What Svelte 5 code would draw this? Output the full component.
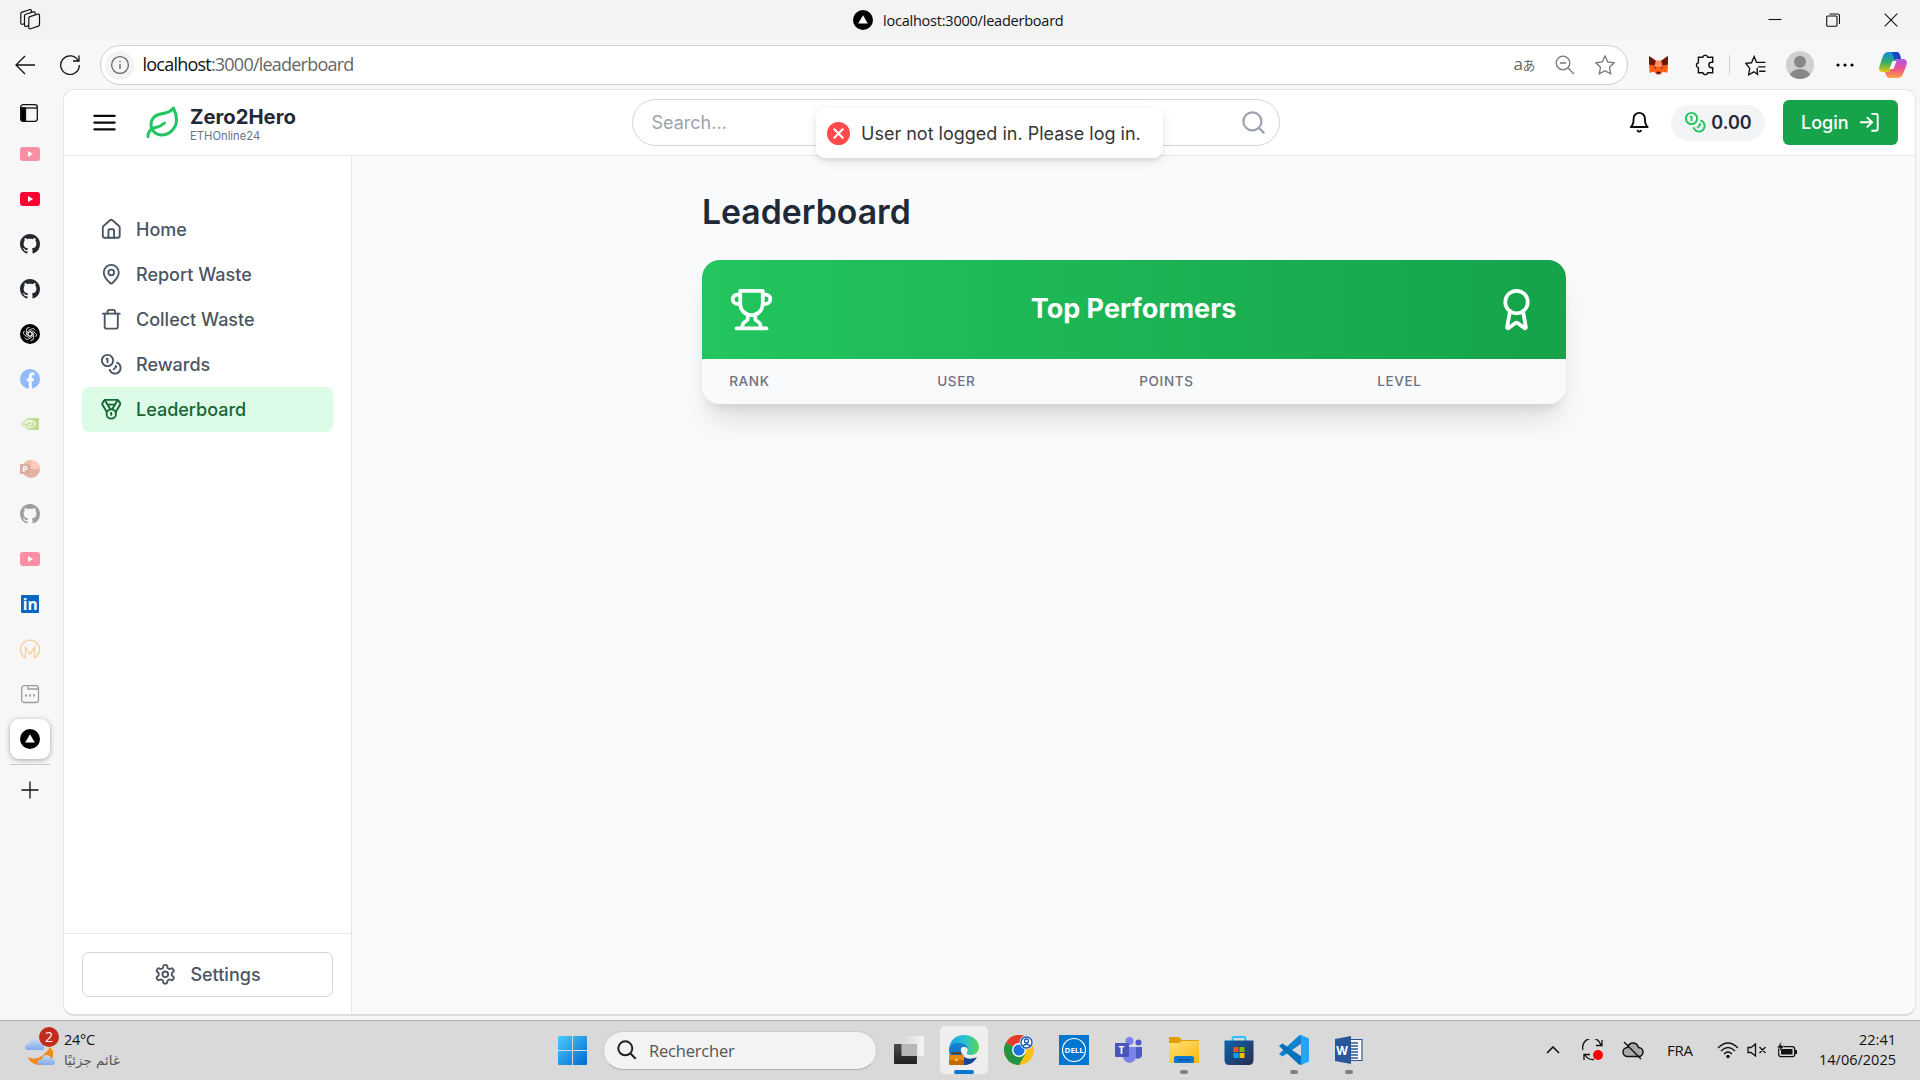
<script>
  const ring = (x, y, r) => `M${x - r} ${y}a${r} ${r} 0 1 0 ${2 * r} 0a${r} ${r} 0 1 0 ${-2 * r} 0`;

  const icons = {
    menu: ['M3 12h18', 'M3 6h18', 'M3 18h18'],
    leaf: ['M11 20A7 7 0 0 1 9.8 6.1C15.5 5 17 4.48 19 2c1 2 2 4.18 2 8 0 5.5-4.78 10-10 10Z', 'M2 21c0-3 1.85-5.36 5.08-6C9.5 14.52 12 13 13 12'],
    search: [ring(11, 11, 8), 'm21 21-4.3-4.3'],
    bell: ['M6 8a6 6 0 0 1 12 0c0 7 3 9 3 9H3s3-2 3-9', 'M10.3 21a1.94 1.94 0 0 0 3.4 0'],
    coins: [ring(8, 8, 6), 'M18.09 10.37A6 6 0 1 1 10.34 18', 'M7 6h1v4', 'm16.71 13.88.7.71-2.82 2.82'],
    login: ['M15 3h4a2 2 0 0 1 2 2v14a2 2 0 0 1-2 2h-4', 'm10 17 5-5-5-5', 'M15 12H3'],
    home: ['M15 21v-8a1 1 0 0 0-1-1h-4a1 1 0 0 0-1 1v8', 'M3 10a2 2 0 0 1 .709-1.528l7-5.999a2 2 0 0 1 2.582 0l7 5.999A2 2 0 0 1 21 10v9a2 2 0 0 1-2 2H5a2 2 0 0 1-2-2z'],
    pin: ['M20 10c0 4.993-5.539 10.193-7.399 11.799a1 1 0 0 1-1.202 0C9.539 20.193 4 14.993 4 10a8 8 0 0 1 16 0', ring(12, 10, 3)],
    trash: ['M3 6h18', 'M19 6v14c0 1-1 2-2 2H7c-1 0-2-1-2-2V6', 'M8 6V4c0-1 1-2 2-2h4c1 0 2 1 2 2v2'],
    medal: ['M7.21 15 2.66 7.14a2 2 0 0 1 .13-2.2L4.4 2.8A2 2 0 0 1 6 2h12a2 2 0 0 1 1.6.8l1.6 2.14a2 2 0 0 1 .14 2.2L16.79 15', 'M11 12 5.12 2.2', 'm13 12 5.88-9.8', 'M8 7h8', ring(12, 17, 5), 'M12 18v-2h-.5'],
    settings: ['M12.22 2h-.44a2 2 0 0 0-2 2v.18a2 2 0 0 1-1 1.73l-.43.25a2 2 0 0 1-2 0l-.15-.08a2 2 0 0 0-2.73.73l-.22.38a2 2 0 0 0 .73 2.73l.15.1a2 2 0 0 1 1 1.72v.51a2 2 0 0 1-1 1.74l-.15.09a2 2 0 0 0-.73 2.73l.22.38a2 2 0 0 0 2.73.73l.15-.08a2 2 0 0 1 2 0l.43.25a2 2 0 0 1 1 1.73V20a2 2 0 0 0 2 2h.44a2 2 0 0 0 2-2v-.18a2 2 0 0 1 1-1.73l.43-.25a2 2 0 0 1 2 0l.15.08a2 2 0 0 0 2.73-.73l.22-.39a2 2 0 0 0-.73-2.73l-.15-.08a2 2 0 0 1-1-1.74v-.5a2 2 0 0 1 1-1.74l.15-.09a2 2 0 0 0 .73-2.73l-.22-.38a2 2 0 0 0-2.73-.73l-.15.08a2 2 0 0 1-2 0l-.43-.25a2 2 0 0 1-1-1.73V4a2 2 0 0 0-2-2z', ring(12, 12, 3)],
    trophy: ['M6 9H4.5a2.5 2.5 0 0 1 0-5H6', 'M18 9h1.5a2.5 2.5 0 0 0 0-5H18', 'M4 22h16', 'M10 14.66V17c0 .55-.47.98-.97 1.21C7.85 18.75 7 20.24 7 22', 'M14 14.66V17c0 .55.47.98.97 1.21C16.15 18.75 17 20.24 17 22', 'M18 2H6v7a6 6 0 0 0 12 0V2Z'],
    award: ['m15.477 12.89 1.515 8.526a.5.5 0 0 1-.81.47l-3.58-2.687a1 1 0 0 0-1.197 0l-3.586 2.686a.5.5 0 0 1-.81-.469l1.514-8.526', ring(12, 8, 6)]
  };

  const nav = [
    { icon: 'home', label: 'Home' },
    { icon: 'pin', label: 'Report Waste' },
    { icon: 'trash', label: 'Collect Waste' },
    { icon: 'coins', label: 'Rewards' },
    { icon: 'medal', label: 'Leaderboard', active: true }
  ];

  const tabs = [
    { kind: 'youtube', faded: true }, { kind: 'youtube' }, { kind: 'github' }, { kind: 'github' },
    { kind: 'openai' }, { kind: 'facebook', faded: true }, { kind: 'nvidia', faded: true },
    { kind: 'ppt', faded: true }, { kind: 'github', faded: true }, { kind: 'youtube', faded: true },
    { kind: 'linkedin' }, { kind: 'moodle', faded: true }, { kind: 'page', faded: true },
    { kind: 'next', current: true }
  ];

  const apps = [
    { kind: 'taskview' }, { kind: 'edge', active: true }, { kind: 'chrome' }, { kind: 'dell' }, { kind: 'teams' },
    { kind: 'files', open: true }, { kind: 'store' }, { kind: 'code', open: true }, { kind: 'word', open: true }
  ];

  const columns = ['Rank', 'User', 'Points', 'Level'];
</script>

{#snippet icon(name, size)}
  <svg class="icon {size}" viewBox="0 0 24 24">
    {#each icons[name] as d}<path {d} />{/each}
  </svg>
{/snippet}

{#snippet nextLogo()}
  <svg class="fav" viewBox="0 0 20 20"><circle cx="10" cy="10" r="10" /><path d="M10 5.2 14.8 13.4H5.2z" fill="#fff" /></svg>
{/snippet}

{#snippet favicon(kind)}
  {#if kind === 'youtube'}
    <svg class="fav" viewBox="0 0 20 20"><rect y="3" width="20" height="14" rx="3" fill="#ff0033" /><path d="M8 7v6l5-3z" fill="#fff" /></svg>
  {:else if kind === 'github'}
    <svg class="fav" viewBox="0 0 16 16"><path fill="#24292f" d="M8 0C3.58 0 0 3.58 0 8c0 3.54 2.29 6.53 5.47 7.59.4.07.55-.17.55-.38 0-.19-.01-.82-.01-1.49-2.01.37-2.53-.49-2.69-.94-.09-.23-.48-.94-.82-1.13-.28-.15-.68-.52-.01-.53.63-.01 1.08.58 1.23.82.72 1.21 1.87.87 2.33.66.07-.52.28-.87.51-1.07-1.78-.2-3.64-.89-3.64-3.95 0-.87.31-1.59.82-2.15-.08-.2-.36-1.02.08-2.12 0 0 .67-.21 2.2.82.64-.18 1.32-.27 2-.27s1.36.09 2 .27c1.53-1.04 2.2-.82 2.2-.82.44 1.1.16 1.92.08 2.12.51.56.82 1.27.82 2.15 0 3.07-1.87 3.75-3.65 3.95.29.25.54.73.54 1.48 0 1.07-.01 1.93-.01 2.2 0 .21.15.46.55.38A8.01 8.01 0 0 0 16 8c0-4.42-3.58-8-8-8z" /></svg>
  {:else if kind === 'openai'}
    <svg class="fav" viewBox="0 0 20 20"><circle cx="10" cy="10" r="10" />
      <g fill="none" stroke="#fff" stroke-width=".8">
        {#each [0, 60, 120, 180, 240, 300] as a}
          <path d="M10 7.7 12.1 8.9V13l-3.4 2A2.9 2.9 0 0 1 4.6 13.6" transform="rotate({a} 10 10)" />
        {/each}
      </g>
    </svg>
  {:else if kind === 'facebook'}
    <svg class="fav" viewBox="0 0 20 20"><circle cx="10" cy="10" r="10" fill="#0866ff" /><path d="M14.4 4.7h-1.6q-2.500 0-2.500 2.900V20M6.700 10.700h7.100" fill="none" stroke="#fff" stroke-width="3" /></svg>
  {:else if kind === 'nvidia'}
    <svg class="fav" viewBox="0 0 20 20"><path d="M8 4h11v12H8z" fill="#76b900" /><path d="M1 10q4-5.5 9-5.5T18 10q-3.500 5.200-8.200 5.200T1 10z" fill="#76b900" /><path d="M3 10q3-3.800 7-3.600 3.500.3 5.500 3.100-2.500 4.200-6 4.200T3 10zM5.600 9.900q2-2.500 4.600-2.100 2.200.5 1.600 2.200-1 2-3 1.200l-.7-1.500" fill="none" stroke="#fff" stroke-width="1.100" /></svg>
  {:else if kind === 'ppt'}
    <svg class="fav" viewBox="0 0 20 20"><circle cx="11" cy="10" r="9" fill="#d35230" /><path d="M11 1a9 9 0 0 1 9 9h-9z" fill="#ff8f6b" /><path d="M2 10a9 9 0 0 1 9-9v9z" fill="#ed6c47" /><rect y="5" width="10.500" height="10" rx="1" fill="#b7472a" /><text x="2.300" y="13.300" class="mark" font-size="9">P</text></svg>
  {:else if kind === 'linkedin'}
    <svg class="fav" viewBox="0 0 20 20"><rect x="1" y="1" width="18" height="18" rx="1" fill="#0a66c2" /><text x="2.700" y="16" class="mark" font-size="15.500">in</text></svg>
  {:else if kind === 'moodle'}
    <svg class="fav" viewBox="0 0 20 20"><path d="M5.500 19V8.500L10 15l4.500-6.500V19M5.500 19a9.500 9.500 0 1 1 9 0" fill="none" stroke="#f98f1d" stroke-width="1.300" /></svg>
  {:else if kind === 'page'}
    <svg class="fav" viewBox="0 0 20 20" fill="none" stroke="#222" stroke-width="1.300"><rect x="1.700" y="1.700" width="16.800" height="16.800" rx="2.500" /><path d="M8 2v3h10.500" /><path d="M5 11.500h2M9 11.500h2M13 11.500h2" stroke-width="2" /></svg>
  {:else}
    {@render nextLogo()}
  {/if}
{/snippet}

{#snippet appIcon(kind)}
  {#if kind === 'taskview'}
    <svg class="app-icon" viewBox="0 0 30 30"><defs><linearGradient id="tv" x2="0" y2="1"><stop stop-color="#4a4a4a" /><stop offset="1" stop-color="#1f1f1f" /></linearGradient><linearGradient id="tw"><stop stop-color="#d8d8d8" /><stop offset="1" stop-color="#f8f8f8" /></linearGradient></defs><rect y="9" width="23" height="20" rx="1" fill="url(#tv)" /><rect x="7.500" y="1" width="22.500" height="20" rx="1" fill="url(#tw)" fill-opacity=".9" /><rect x="8" y="9" width="15" height="12" fill="#b8b8b8" /></svg>
  {:else if kind === 'edge'}
    <svg class="app-icon" viewBox="0 0 30 30"><defs><linearGradient id="e1"><stop stop-color="#1a9ee0" /><stop offset=".5" stop-color="#2bbfd8" /><stop offset="1" stop-color="#57d84f" /></linearGradient><linearGradient id="e3" x2="0" y2="1"><stop stop-color="#1584d4" /><stop offset="1" stop-color="#0a5cb0" /></linearGradient></defs>
      <path d="M0 14C1 5 7 0 15 0c9 0 15 6 15 12 0 5-4 8-8 8-3 0-5-1-4-3 2-4 0-7-5-7C7 10 3 12 0 14z" fill="url(#e1)" /><path d="M0 14c2-4 6-7 11-6 4 0 8 3 8 6-3-3-7 0-6 5 1 4 6 7 14 4-3 5-8 7-13 7C6 30 0 24 0 14z" fill="url(#e3)" /><path d="M13 19c2 5 9 6 15 3-3 6-8 8-13 8-3-3-3-7-2-11z" fill="#124b91" /><circle cx="15" cy="15" r="3.200" fill="#eee" />
      <path d="M4 20v-2h7v2" fill="none" stroke="#6e3a00" stroke-width="1.300" /><rect y="20" width="15" height="10" rx="1" fill="#c66a00" /><path d="M0 20h15v5H0z" fill="#e58a13" /><circle cx="7.500" cy="25" r="1.300" fill="#ffd23e" /></svg>
  {:else if kind === 'chrome'}
    <svg class="app-icon" viewBox="0 0 30 30"><circle cx="15" cy="15" r="15" fill="#fbc116" /><path d="M15 15 2 7.500A15 15 0 0 1 28 7.500H15z" fill="#e33b2e" /><path d="M2 7.500A15 15 0 0 0 15 30l6.500-11.200L15 15z" fill="#229342" /><circle cx="15" cy="15" r="7" fill="#fff" /><circle cx="15" cy="15" r="5.600" fill="#1a73e8" /><circle cx="22.500" cy="7.500" r="7" fill="#dce8fc" /><circle cx="22.500" cy="7.500" r="5.500" fill="#fff" stroke="#1b56b4" stroke-width="1.400" /><circle cx="22.500" cy="6" r="2" fill="none" stroke="#1b56b4" stroke-width="1.300" /><path d="M18.700 11q3.800-3.500 7.600 0" fill="none" stroke="#1b56b4" stroke-width="1.400" /></svg>
  {:else if kind === 'dell'}
    <svg class="app-icon" viewBox="0 0 30 30"><path d="M0 0h30v30H0z" fill="#0076ce" /><circle cx="15" cy="15" r="11.500" fill="none" stroke="#fff" stroke-width="1.200" /><text x="5.600" y="17.800" class="mark" font-size="7.600" textLength="19" lengthAdjust="spacingAndGlyphs">DELL</text></svg>
  {:else if kind === 'teams'}
    <svg class="app-icon" viewBox="0 0 30 30"><circle cx="24.500" cy="7.500" r="3" fill="#5059c9" /><path d="M19 12h9v8c0 5-9 5-9 0z" fill="#5059c9" /><circle cx="15.500" cy="6" r="4" fill="#7b83eb" /><path d="M9 12h13v9c0 9-13 9-13 0z" fill="#7b83eb" /><rect x="1" y="8" width="14" height="14" rx="1" fill="#4b53bc" /><text x="4.500" y="18.700" class="mark" font-size="10">T</text></svg>
  {:else if kind === 'files'}
    <svg class="app-icon" viewBox="0 0 30 30"><defs><linearGradient id="fo" x2="1" y2="1"><stop stop-color="#ffe07a" /><stop offset="1" stop-color="#fbb80f" /></linearGradient></defs><path d="M0 3q0-1 1-1h9l3 3h16q1 0 1 1v10H0z" fill="#dfa007" /><path d="M0 8h10l3-2h17v22H0z" fill="url(#fo)" /><path d="M5 28v-5q0-2 2-2h16q2 0 2 2v5z" fill="#0d78ce" /><path d="M8.500 25h13" stroke="#064d93" stroke-width="1.200" /></svg>
  {:else if kind === 'store'}
    <svg class="app-icon" viewBox="0 0 30 30"><defs><linearGradient id="st" x2="1" y2="1"><stop stop-color="#0b64ad" /><stop offset="1" stop-color="#2b2c52" /></linearGradient></defs><path d="M8.500 6V3.500Q8.500 2 10 2h10q1.500 0 1.500 1.500V6" fill="none" stroke="#26c0f2" stroke-width="1.800" /><path d="M.5 5.500h29V25q0 5-5 5h-19q-5 0-5-5z" fill="url(#st)" /><path d="M9.500 12h5v5h-5z" fill="#f25022" /><path d="M15.500 12h5v5h-5z" fill="#7fba00" /><path d="M9.500 18h5v5h-5z" fill="#00a4ef" /><path d="M15.500 18h5v5h-5z" fill="#ffb900" /></svg>
  {:else if kind === 'code'}
    <svg class="app-icon" viewBox="0 0 30 30"><path d="M22.500 8.500 3.500 21.500 0 19 20 .6 22.500 0z" fill="#0a84d0" /><path d="M22.500 21.500 3.500 8.500 0 11l20 18.400 2.500.6z" fill="#0072bc" /><path d="M22 0 30 3.500v23L22 30z" fill="#28a5f0" /></svg>
  {:else}
    <svg class="app-icon" viewBox="0 0 30 30"><path d="M14 4.500h14v21H14z" fill="#fff" stroke="#2b579a" stroke-width="1.200" /><path d="M16 8h8M16 11h8M16 14h8M16 17h8M16 20h8M16 23h8" stroke="#2b579a" stroke-width="1.300" /><path d="M1 4 17 1v28L1 26z" fill="#2b579a" /><text x="2.300" y="19.500" class="mark" font-size="12">W</text></svg>
  {/if}
{/snippet}

<div class="screen">
  <div class="titlebar">
    <svg class="workspaces" viewBox="0 0 22 22" fill="#f3f3f3" stroke="#111" stroke-width="1.200" stroke-linejoin="round">
      {#each [[-8, -4.500], [-4.300, -2.300], [0, 0]] as [x, y]}
        <path transform="translate({x} {y})" d="m11 7.600 7.500-2.400q2-.5 2 1.500v8.700q0 1.300-1.200 1.700l-7.500 2.600q-2 .6-2-1.500V9.400q0-1.400 1.200-1.800z" />
      {/each}
    </svg>
    <div class="window-title">{@render nextLogo()}<span>localhost:3000/leaderboard</span></div>
    <div class="window-buttons">
      <svg viewBox="0 0 14 14"><path d="M.5 6.500h13" /></svg>
      <svg viewBox="0 0 14 14"><rect x=".7" y="3" width="10.300" height="10.300" rx="1" /><path d="M3.500 1h8q2 0 2 2v8" /></svg>
      <svg viewBox="0 0 14 14"><path d="m.7.7 12.600 12.600M13.300.7.7 13.300" /></svg>
    </div>
  </div>

  <div class="toolbar">
    <svg class="line back" viewBox="0 0 20 20"><path d="M20 10H1M10 1 1 10l9 9" /></svg>
    <svg class="line reload" viewBox="0 0 20 20"><path d="M18.300 6A9.300 9.300 0 1 0 19.300 10M19 .5V6h-6" /></svg>
    <div class="address">
      <span class="info"><svg class="line" viewBox="0 0 20 20"><circle cx="10" cy="10" r="8.400" /><path d="M10 9v5M10 5.800v1.500" /></svg></span>
      <span class="url"><b>localhost</b>:3000/leaderboard</span>
      <div class="address-tools">
        <span class="translate">a<small>あ</small></span>
        <svg class="line" viewBox="0 0 20 20"><circle cx="8" cy="8" r="6.800" /><path d="m13 13 6 6M5 8h6" /></svg>
        <svg class="line" viewBox="0 0 20 20"><path d="m10 1 2.800 6 6.400.8-4.700 4.500 1.200 6.500L10 15.700l-5.700 3.100 1.200-6.500L.8 7.800 7.200 7z" /></svg>
      </div>
    </div>
    <svg class="fox" viewBox="0 0 20 20"><path d="m1 1 6.500 4.500h5L19 1v8l-.5 8-4.500-1-2 2.500H8L6 16l-4.500 1L1 9z" fill="#ff5c16" /><path d="m1 1 6.500 4.500L6 10 1 9zM19 1l-6.500 4.500L14 10l5-1z" fill="#661800" /><path d="m7.500 5.500-1 6h7l-1-6z" fill="#ff8d5d" /><path d="m5.500 11 2.500.8-.5 1.300zM14.500 11l-2.500.8.5 1.300zM8 16h4l-.5 1.800h-3z" fill="#2a1d2f" /></svg>
    <svg class="line puzzle" viewBox="0 0 20 20"><path d="M4 3h4a2.300 2.300 0 0 1 4.500 0H17v4.500h-1a2.300 2.300 0 0 0 0 5h1V17h-4.500a2.300 2.300 0 0 1-4.500 0H4v-4.500a2.300 2.300 0 0 1 0-4.500z" /></svg>
    <i class="divider"></i>
    <svg class="line favorites" viewBox="0 0 20 20"><path d="M11.500 12.300 12 18.500 8.500 16l-5 2.800 1-6.100L.8 8l5.400-.6L8.700 1.500 11 7h8.500M12.500 11.300h7M13.500 15.500h6" /></svg>
    <svg class="avatar" viewBox="0 0 28 28"><clipPath id="av"><circle cx="14" cy="14" r="14" /></clipPath><g clip-path="url(#av)"><path d="M0 0h28v28H0z" fill="#d2d0ce" /><circle cx="14" cy="10.700" r="6" fill="#8a8886" /><ellipse cx="14" cy="26" rx="10.500" ry="8" fill="#8a8886" /></g></svg>
    <svg class="more" viewBox="0 0 18 4"><circle cx="2" cy="2" r="1.600" /><circle cx="9" cy="2" r="1.600" /><circle cx="16" cy="2" r="1.600" /></svg>
    <svg class="copilot" viewBox="0 0 28 28"><defs><linearGradient id="c1" x2="0" y2="1"><stop stop-color="#1588e0" /><stop offset=".5" stop-color="#2fae6c" /><stop offset="1" stop-color="#e8c20b" /></linearGradient><linearGradient id="c2" x2="0" y2="1"><stop stop-color="#a45bf0" /><stop offset=".5" stop-color="#ee5090" /><stop offset="1" stop-color="#ffa33e" /></linearGradient></defs><path d="M10 1h8q2 0 3 3l1 4h-4q-2 0-3 3l-3 7q-1 3-4 3H4q-5 0-3.500-6L4 5q1.500-4 6-4z" fill="url(#c1)" /><path d="M13 1h5q2 0 3 3l1 4h-4q-2 0-2.500 1z" fill="#1647c8" /><path d="M18 27h-8q-2 0-3-3l-1-3h3q2 0 3-3l3-7q1-3 4-3h5q5 0 3.500 6L24 23q-1.500 4-6 4z" fill="url(#c2)" /><path d="m13.500 10-3 8h4l3-8z" fill="#fff" /></svg>
  </div>

  <div class="middle">
    <div class="tabs">
      <svg class="line panel" viewBox="0 0 20 20"><rect x="1.700" y="1.700" width="16.600" height="16.600" rx="2.500" /><path d="M2 5h16" /><path d="M2 5h4.500v13H4q-2 0-2-2z" fill="#000" /></svg>
      {#each tabs as t}
        <div class="tab" class:current={t.current}><span class:faded={t.faded}>{@render favicon(t.kind)}</span></div>
      {/each}
      <i class="tab-rule"></i>
      <svg class="line plus" viewBox="0 0 20 20"><path d="M10 1.500v17M1.500 10h17" /></svg>
    </div>

    <div class="page">
      <header>
        <button class="burger">{@render icon('menu', 'lg')}</button>
        <span class="leaf">{@render icon('leaf', 'xl')}</span>
        <div class="brand"><strong>Zero2Hero</strong><small>ETHOnline24</small></div>
        <div class="search"><span>Search...</span>{@render icon('search', 's27')}</div>
        <span class="bell">{@render icon('bell', 'md')}</span>
        <div class="balance">{@render icon('coins', 'md')}<span>0.00</span></div>
        <button class="login">Login {@render icon('login', 'md')}</button>
      </header>
      <div class="body">
        <aside>
          <nav>
            {#each nav as n}
              <div class="nav-item" class:active={n.active}>{@render icon(n.icon, 'md')}<span>{n.label}</span></div>
            {/each}
          </nav>
          <div class="aside-foot"><button class="settings">{@render icon('settings', 'md')}<span>Settings</span></button></div>
        </aside>
        <main>
          <div class="content">
            <h1>Leaderboard</h1>
            <section class="card">
              <div class="card-head">{@render icon('trophy', 'xxl')}<h2>Top Performers</h2>{@render icon('award', 'xxl')}</div>
              <div class="thead">{#each columns as c}<span>{c}</span>{/each}</div>
            </section>
          </div>
        </main>
      </div>
      <div class="toast">
        <svg class="toast-icon" viewBox="0 0 22 22"><circle cx="11" cy="11" r="11" fill="#ff4b4b" /><path d="m7 7 8 8M15 7l-8 8" stroke="#fff" stroke-width="2" stroke-linecap="round" /></svg>
        <span>User not logged in. Please log in.</span>
      </div>
    </div>
  </div>

  <div class="taskbar">
    <div class="weather">
      <div class="weather-icon">
        <svg viewBox="0 0 32 34"><defs><linearGradient id="cl" x2="0" y2="1"><stop stop-color="#c9d9f8" /><stop offset="1" stop-color="#82a9ea" /></linearGradient></defs><path d="M3 24q6 4 14-1 6-5 8-9l3 4q1 8-5 12-6 4-13 1-6-2-7-7z" fill="#f0881c" /><path d="M3 17q-3 0-3-3t4-3q1-5 5-5t5 4q5 0 5 4t-3 3z" fill="url(#cl)" /><path d="M15 32q-3-1-2-4 1-2 4-2 1-4 5-4 4 1 4 4 4 0 4 3t-3 3z" fill="url(#cl)" /></svg>
        <span class="badge">2</span>
      </div>
      <div class="weather-text"><span>24°C</span><small dir="rtl">غائم جزئيًا</small></div>
    </div>
    <svg class="start" viewBox="0 0 29 29"><defs><linearGradient id="wn" gradientUnits="userSpaceOnUse" x1="0" y1="0" x2="29" y2="29"><stop stop-color="#4cc9fd" /><stop offset="1" stop-color="#0169cf" /></linearGradient></defs><path d="M0 1q0-1 1-1h13v14H0zM15 0h13q1 0 1 1v13H15zM0 15h14v14H1q-1 0-1-1zM15 15h14v13q0 1-1 1H15z" fill="url(#wn)" /></svg>
    <div class="task-search">
      <svg viewBox="0 0 20 20"><circle cx="8.300" cy="8.300" r="7" /><path d="m13.300 13.300 5.400 5.400" /></svg>
      <span>Rechercher</span>
    </div>
    <div class="apps">
      {#each apps as a}
        <div class="app" class:focused={a.active}>{@render appIcon(a.kind)}{#if a.open || a.active}<i class="dot"></i>{/if}</div>
      {/each}
    </div>
    <div class="tray">
      <svg class="line chev" viewBox="0 0 14 8"><path d="m1 7 6-6 6 6" /></svg>
      <svg class="line sync" viewBox="0 0 22 22"><path d="M1 11A9.300 9.300 0 0 1 19 6M20 1v5.500h-6M2 21v-5.500h6M3 16q3 5 9 4.500" /><circle cx="16" cy="16" r="5" fill="#f00" stroke="none" /></svg>
      <svg class="line cloud" viewBox="0 0 22 22"><path d="M5.500 17.500a4.500 4.500 0 0 1 0-9Q7 4 11 4t5.500 4.500a4.500 4.500 0 0 1 0 9z" fill="#aaa" /><path d="m2 3 17 17" /></svg>
      <span class="lang">FRA</span>
      <svg class="line wifi" viewBox="0 0 22 18"><path d="M1 7q10-10 20 0M4 10q7-7 14 0M7 13q4-4 8 0" /><circle cx="11" cy="15.500" r="1.700" fill="#111" stroke="none" /></svg>
      <svg class="line vol" viewBox="0 0 20 14"><path d="M1 4.500h3L8.500 1v12L4 9.500H1zM12.500 4l6 6M18.500 4l-6 6" /></svg>
      <svg class="line batt" viewBox="0 0 21 18"><rect x="1.700" y="5.700" width="16" height="10" rx="2.500" /><path d="M4 8h11.500v5.500H4z" fill="#111" stroke="none" /><path d="M19 9v4" stroke-width="2" /><path d="M4.500 0 0 7h3L2 11.500 7.500 4.500H4z" fill="#111" stroke="#d9d9d9" stroke-width=".6" /></svg>
      <div class="clock"><span>22:41</span><span>14/06/2025</span></div>
    </div>
  </div>
</div>

<style>
  :global(body) { margin: 0; }
  * { box-sizing: border-box; }
  button { font: inherit; border: 0; background: none; padding: 0; color: inherit; }
  svg { display: block; flex: none; }
  .screen { width: 1920px; height: 1080px; display: flex; flex-direction: column; overflow: hidden; background: #f7f7f7; font-family: 'Open Sans', 'Noto Sans CJK JP', sans-serif; }
  .icon { fill: none; stroke: currentColor; stroke-width: 2; stroke-linecap: round; stroke-linejoin: round; width: 22.5px; height: 22.5px; }
  .icon.lg, .icon.s27 { width: 27px; height: 27px; }
  .icon.xl { width: 36px; height: 36px; }
  .icon.xxl { width: 45px; height: 45px; }
  .line { fill: none; stroke: #111; stroke-width: 1.3; }
  .fav { width: 20px; height: 20px; }
  .mark { fill: #fff; font-family: 'Open Sans', sans-serif; font-weight: 700; }

  .titlebar { height: 40px; flex: none; background: #f3f3f3; display: grid; grid-template-columns: 1fr auto 1fr; align-items: center; padding: 0 22px 0 19px; }
  .workspaces { width: 22px; height: 22px; }
  .window-title { display: flex; align-items: center; gap: 9.5px; font-size: 14.5px; letter-spacing: -0.22px; color: #111; }
  .window-buttons { display: flex; justify-content: flex-end; gap: 44px; }
  .window-buttons svg { width: 14px; height: 14px; fill: none; stroke: #111; stroke-width: 1.1; }

  .toolbar { height: 49px; flex: none; display: flex; align-items: center; padding: 1px 0 0 15px; }
  .back, .reload { width: 20px; height: 20px; }
  .reload { margin-left: 25px; }
  .address { flex: none; width: 1528px; height: 40px; margin-left: 20px; border: 1px solid #cfcfcf; border-radius: 20px; background: #fff; display: flex; align-items: center; padding: 0 12px 0 4px; }
  .info { width: 29px; height: 29px; border-radius: 50%; background: #f3f3f3; display: grid; place-items: center; }
  .info svg { width: 20px; height: 20px; stroke: #666; }
  .url { margin-left: 8.5px; padding-bottom: 2px; font-size: 18px; letter-spacing: -0.78px; color: #666; }
  .url b { font-weight: 400; color: #111; }
  .address-tools { margin-left: auto; display: flex; align-items: center; gap: 20px; }
  .address-tools svg { width: 20px; height: 20px; stroke: #777; }
  .translate { font-size: 17px; color: #666; letter-spacing: -0.5px; padding-bottom: 2px; line-height: 22px; }
  .translate small { font-size: 13px; }
  .fox { width: 21px; height: 21px; margin-left: 20px; }
  .puzzle { width: 22px; height: 22px; margin-left: 25px; }
  .divider { width: 1px; height: 20px; background: #d0d0d0; margin-left: 13px; }
  .favorites { width: 21px; height: 21px; margin-left: 15px; }
  .avatar { width: 28px; height: 28px; margin-left: 20px; }
  .more { width: 18px; height: 4px; margin-left: 22px; }
  .copilot { width: 28px; height: 28px; margin-left: 25px; }

  .middle { height: 931px; flex: none; display: flex; }
  .tabs { width: 63px; flex: none; display: flex; flex-direction: column; align-items: center; padding: 14px 3px 0 0; }
  .panel { width: 20px; height: 20px; margin-right: 2px; margin-bottom: 11px; }
  .tab { width: 40px; height: 40px; margin-bottom: 5px; display: grid; place-items: center; }
  .tab.current { background: #fff; border-radius: 9px; box-shadow: 0 1px 5px rgba(0, 0, 0, .35); }
  .faded { opacity: .42; }
  .tab-rule { width: 40px; height: 1px; background: #c8c8c8; }
  .plus { width: 20px; height: 20px; margin-top: 15px; margin-right: 1px; }

  .page { position: relative; width: 1853px; height: 927px; border: 1px solid #e4e4e4; border-bottom: 2px solid #dcdcdc; border-radius: 11px; overflow: hidden; background: #f9fafb; display: flex; flex-direction: column; font-family: Inter, sans-serif; font-size: 18px; line-height: 27px; }
  header { height: 66px; flex: none; display: flex; align-items: center; background: #fff; border-bottom: 1px solid #e5e7eb; padding: 0 17px 0 27px; }
  .burger { color: #0a0a0a; }
  .leaf { color: #22c55e; margin-left: 26.5px; }
  .brand { display: flex; flex-direction: column; margin-left: 9.5px; padding-top: 2px; width: 441.5px; color: #1f2937; }
  .brand strong { font-size: 20.25px; line-height: 28px; height: 26px; }
  .brand small { font-size: 11.25px; line-height: 15px; color: #6b7280; }
  .search { width: 648px; height: 47px; border: 1px solid #d1d5db; border-radius: 24px; display: flex; align-items: center; justify-content: space-between; padding: 0 12px 0 19px; color: #9ca3af; }
  .bell { margin-left: 348px; color: #0a0a0a; }
  .balance { margin-left: 21px; width: 94px; height: 36px; border-radius: 18px; background: #f3f4f6; display: flex; align-items: center; justify-content: center; gap: 4.5px; color: #22c55e; }
  .balance span { color: #1f2937; font-weight: 600; }
  .login { margin-left: 18px; width: 115px; height: 45px; border-radius: 6px; background: #16a34a; color: #fff; font-weight: 500; display: flex; align-items: center; justify-content: center; gap: 9px; }

  .body { flex: 1; display: flex; min-height: 0; }
  aside { width: 288px; flex: none; background: #fff; border-right: 1px solid #e5e7eb; display: flex; flex-direction: column; justify-content: space-between; color: #4b5563; font-weight: 500; }
  nav { padding: 51px 18px 0; }
  .nav-item { height: 45px; padding: 0 18px; border-radius: 6.75px; display: flex; align-items: center; gap: 13.5px; }
  .nav-item.active { background: #dcfce7; color: #166534; }
  .aside-foot { height: 81px; border-top: 1px solid #e5e7eb; padding: 18px 18px 0; }
  .settings { width: 100%; height: 45px; border: 1px solid #d1d5db; border-radius: 6.75px; display: flex; align-items: center; justify-content: center; gap: 13.5px; }
  main { flex: 1; display: flex; justify-content: center; padding: 36px 0 0 0; }
  .content { width: 864px; }
  h1 { margin: 0 0 27px; padding-left: 0.5px; font-size: 33.75px; line-height: 40.5px; font-weight: 600; color: #1f2937; }
  .card { border-radius: 18px; overflow: hidden; background: #fff; box-shadow: 0 22px 28px -5px rgba(0, 0, 0, .1), 0 9px 11px -6px rgba(0, 0, 0, .1); }
  .card-head { height: 99px; padding: 27px; display: flex; align-items: center; justify-content: space-between; color: #fff; background: linear-gradient(to right, #22c55e, #16a34a); }
  h2 { margin: 0; font-size: 27px; line-height: 36px; font-weight: 700; }
  .thead { height: 45px; display: grid; grid-template-columns: 208px 202px 238px 1fr; align-items: center; padding-left: 27.7px; background: #f9fafb; font-size: 13.5px; line-height: 18px; font-weight: 500; letter-spacing: .05em; text-transform: uppercase; color: #6b7280; }
  .toast { position: absolute; left: 752px; top: 18px; width: 347px; height: 50px; border-radius: 9px; background: #fff; box-shadow: 0 3px 11px rgba(0, 0, 0, .1), 0 3px 3px rgba(0, 0, 0, .05); display: flex; align-items: center; padding-left: 11px; gap: 11px; color: #363636; }
  .toast-icon { width: 23px; height: 23px; }

  .taskbar { height: 60px; flex: none; border-top: 1px solid #b0b0b0; background: #d9d9d9; display: flex; align-items: center; color: #111; padding-bottom: 1px; }
  .weather { width: 558px; padding-left: 25px; display: flex; align-items: center; gap: 7px; }
  .weather-icon { position: relative; }
  .weather-icon svg { width: 32px; height: 40px; }
  .badge { position: absolute; left: 14px; top: -3px; width: 20px; height: 20px; border-radius: 50%; background: #c42b1c; color: #fff; font-size: 14px; line-height: 20px; text-align: center; }
  .weather-text { display: flex; flex-direction: column; font-size: 14.5px; line-height: 20px; letter-spacing: -0.3px; }
  .weather-text small { font-family: 'DejaVu Sans', sans-serif; font-size: 13.5px; color: #555; }
  .start { width: 29px; height: 29px; }
  .task-search { margin-left: 16px; width: 274px; height: 39px; border-radius: 20px; background: #f3f3f3; border: 1px solid #cacaca; border-bottom-color: #b0b0b0; display: flex; align-items: center; padding-left: 13px; gap: 12px; font-size: 16.5px; letter-spacing: -0.2px; color: #555; }
  .task-search svg { width: 20px; height: 20px; fill: none; stroke: #222; stroke-width: 2; }
  .apps { display: flex; gap: 7px; margin-left: 8px; }
  .app { position: relative; width: 48px; height: 48px; border-radius: 5px; display: grid; place-items: center; }
  .app.focused { background: #eee; }
  .app-icon { width: 30px; height: 30px; }
  .dot { position: absolute; left: 20px; bottom: 0; width: 8px; height: 4px; border-radius: 2px; background: #808080; }
  .focused .dot { left: 14px; width: 20px; background: #0078d4; }
  .tray { margin-left: auto; padding-right: 24px; display: flex; align-items: center; font-size: 15px; letter-spacing: -0.3px; }
  .chev { width: 14px; height: 8px; stroke-width: 1.6; }
  .sync { width: 22px; height: 22px; margin-left: 22px; }
  .cloud { width: 22px; height: 22px; margin-left: 18px; stroke-width: 1.5; }
  .lang { margin-left: 23px; width: 27px; }
  .wifi { width: 22px; height: 18px; margin-left: 23px; }
  .vol { width: 20px; height: 14px; margin-left: 8px; }
  .batt { width: 21px; height: 18px; margin-left: 10px; }
  .clock { width: 98px; display: flex; flex-direction: column; align-items: flex-end; font-size: 14.5px; line-height: 20px; letter-spacing: 0; }
</style>
